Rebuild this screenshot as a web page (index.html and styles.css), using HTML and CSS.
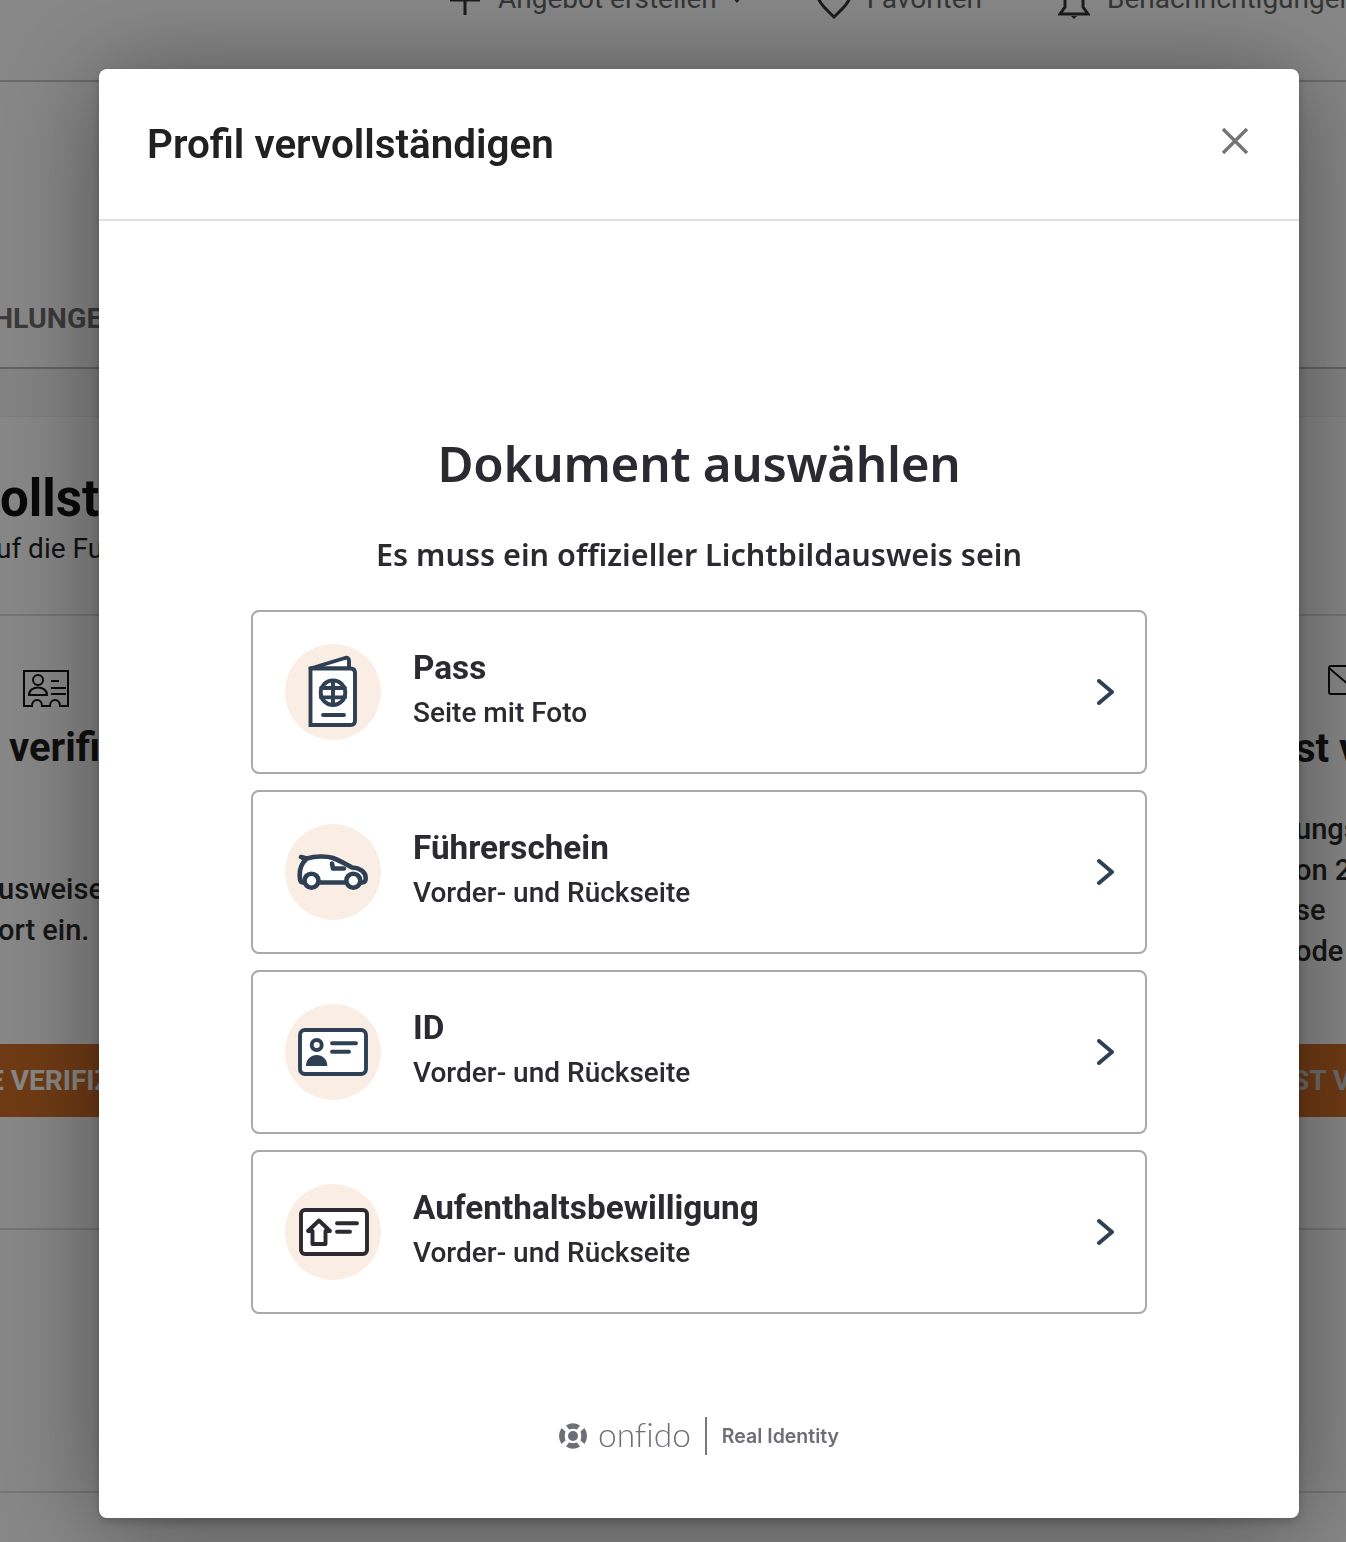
FILE: index.html
```html
<!DOCTYPE html>
<html lang="de">
<head>
<meta charset="utf-8">
<title>Profil vervollständigen</title>
<link rel="stylesheet" href="styles.css">
</head>
<body>
<div class="page">
  <nav class="nav">
    <svg class="nav-plus" viewBox="0 0 30 30"><path d="M15 0V30M0 15H30"/></svg>
    <span class="nav-text">Angebot erstellen</span>
    <svg class="nav-caret" viewBox="0 0 12 7"><path d="M0 0H12L6 7Z"/></svg>
    <svg class="nav-heart" viewBox="0 0 38 40"><path d="M2 12C2 22 12 30 19 37C26 30 36 22 36 12"/></svg>
    <span class="nav-text">Favoriten</span>
    <svg class="nav-bell" viewBox="0 0 32 40"><path d="M7 0V28L2 35H30L25 28V0"/><path class="nav-clap" d="M13 37H19L16 40Z"/></svg>
    <span class="nav-text">Benachrichtigungen</span>
  </nav>
  <div class="tabs"><span class="tab-text">HLUNGEN</span></div>
  <div class="tabs-gap"></div>
  <section class="intro">
    <div class="intro-title">ollständigen</div>
    <div class="intro-sub">uf die Funktionen</div>
  </section>
  <section class="cols">
    <div class="col col-left">
      <svg class="col-icon" viewBox="0 0 48 38">
        <path d="M2 1H46V36H38C38 28 28 28 28 36H20C20 28 10 28 10 36H2Z"/>
        <circle cx="16" cy="10" r="5"/>
        <path d="M7 25C7 15 25 15 25 25ZM29 11H37M29 18H44M29 24H44"/>
      </svg>
      <h3 class="col-title">verifizieren</h3>
      <p class="col-text">usweise<br>ort ein.</p>
      <div class="col-btn">E VERIFIZIEREN</div>
    </div>
    <div class="col col-right">
      <svg class="col-icon-mail" viewBox="0 0 30 32"><path d="M28 1H3Q1 1 1 3V27Q1 29 3 29H28M1 3L28 26"/></svg>
      <h3 class="col-title-r">st v</h3>
      <p class="col-text-r">ungs<br>on 2<br>se<br>ode</p>
      <div class="col-btn-r">ST V</div>
    </div>
  </section>
  <section class="lower"></section>
</div>

<div class="overlay">
  <div class="modal">
    <header class="modal-head">
      <h2 class="modal-title">Profil vervollständigen</h2>
      <svg class="close" viewBox="0 0 28 28"><path d="M2 2L26 26M26 2L2 26"/></svg>
    </header>
    <div class="modal-body">
      <h1 class="doc-title">Dokument auswählen</h1>
      <p class="doc-sub">Es muss ein offizieller Lichtbildausweis sein</p>
      <ul class="doc-list">
        <li class="doc-card">
          <span class="doc-icon">
            <svg viewBox="0 0 96 96">
              <path class="ic ic-w" d="M25.5 24.5L60 14Q64 13 64 17V24.5Z"/>
              <path class="ic ic-w ic-square" d="M25.5 24.5V81H65.5Q70 81 70 76.5V29Q70 24.5 65.5 24.5Z"/>
              <circle class="ic" cx="48" cy="48.7" r="12.3"/>
              <path class="ic" d="M36 44H60M36 53.4H60M48 37V60"/>
              <path class="ic" d="M38 71H59"/>
            </svg>
          </span>
          <span class="doc-text"><strong class="doc-name">Pass</strong><span class="doc-desc">Seite mit Foto</span></span>
          <svg class="chev" viewBox="0 0 18 26"><path d="M2 2L15 13L2 24"/></svg>
        </li>
        <li class="doc-card">
          <span class="doc-icon">
            <svg viewBox="0 0 96 96">
              <path class="ic ic-w ic-thick" d="M16 33L22 34.5C30 32 42 32 48 34C56 37 62 41 67 43.5C75 44 80.7 48 80.7 54C80.7 57 80 58.5 77 58.5H18C15.5 58.5 14.7 56 14.7 51C14.7 44 17 39 21 35.5Z"/>
              <circle class="ic ic-w ic-thick" cx="26.5" cy="56.7" r="7"/>
              <circle class="ic ic-w ic-thick" cx="68.3" cy="56.7" r="7"/>
              <path class="ic ic-thick" d="M47 39.5L48 44.5H59"/>
            </svg>
          </span>
          <span class="doc-text"><strong class="doc-name">Führerschein</strong><span class="doc-desc">Vorder- und Rückseite</span></span>
          <svg class="chev" viewBox="0 0 18 26"><path d="M2 2L15 13L2 24"/></svg>
        </li>
        <li class="doc-card">
          <span class="doc-icon">
            <svg viewBox="0 0 96 96">
              <rect class="ic ic-w" x="15" y="26" width="66" height="44" rx="5"/>
              <circle class="ic" cx="31.7" cy="41" r="5"/>
              <path class="ic-fill" d="M21 62C21 55 26 51 31.7 51S42.3 55 42.3 62Z"/>
              <path class="ic" d="M47 39.3H71M47 47.7H64"/>
            </svg>
          </span>
          <span class="doc-text"><strong class="doc-name">ID</strong><span class="doc-desc">Vorder- und Rückseite</span></span>
          <svg class="chev" viewBox="0 0 18 26"><path d="M2 2L15 13L2 24"/></svg>
        </li>
        <li class="doc-card">
          <span class="doc-icon">
            <svg viewBox="0 0 96 96">
              <rect class="ic ic-dark ic-w" x="16" y="26" width="66" height="44" rx="4"/>
              <path class="ic ic-dark" d="M34 36.5L23 47H27.5V60H40.5V47H45Z"/>
              <path class="ic ic-dark" d="M52 39.3H72M52 47.7H65"/>
            </svg>
          </span>
          <span class="doc-text"><strong class="doc-name">Aufenthaltsbewilligung</strong><span class="doc-desc">Vorder- und Rückseite</span></span>
          <svg class="chev" viewBox="0 0 18 26"><path d="M2 2L15 13L2 24"/></svg>
        </li>
      </ul>
      <footer class="brand">
        <svg class="brand-mark" viewBox="1 1 30 30">
          <circle cx="16" cy="16" r="5"/>
          <path d="M9 5.5Q16 1 23 5.5L20 9.5Q16 8 12 9.5ZM9 26.5Q16 31 23 26.5L20 22.5Q16 24 12 22.5ZM4.5 8Q-0.5 16 4.5 24L8.5 20.5Q7 16 8.5 11.5ZM27.5 8Q32.5 16 27.5 24L23.5 20.5Q25 16 23.5 11.5Z"/>
        </svg>
        <span class="brand-name">onfido</span>
        <span class="brand-line"></span>
        <span class="brand-tag">Real Identity</span>
      </footer>
    </div>
  </div>
</div>
</body>
</html>
```
FILE: styles.css
```css
* { box-sizing: border-box; }
html, body { margin: 0; padding: 0; }
body { width: 1346px; height: 1542px; overflow: hidden; background: #fff; font-family: Roboto, "Liberation Sans", sans-serif; color: #222; }

.page { width: 1346px; height: 1542px; overflow: hidden; }
.nav { height: 82px; border-bottom: 2px solid #c9c9c9; display: flex; align-items: flex-start; padding-left: 450px; white-space: nowrap; overflow: hidden; }
.nav-text { font-size: 28px; line-height: 32px; margin-top: -17px; color: #666; flex: none; }
.nav-plus { width: 30px; height: 30px; flex: none; margin: -15px 18px 0 0; fill: none; stroke: #333; stroke-width: 3; }
.nav-caret { width: 12px; height: 7px; flex: none; margin: -4px 72px 0 14px; fill: #444; }
.nav-heart { width: 38px; height: 40px; flex: none; margin: -20px 14px 0 0; fill: none; stroke: #333; stroke-width: 3; }
.nav-bell { width: 32px; height: 40px; flex: none; margin: -21px 17px 0 76px; fill: none; stroke: #333; stroke-width: 3; }
.nav-clap { fill: #333; stroke: none; }

.tabs { height: 287px; border-bottom: 2px solid #bbb; padding-top: 219px; }
.tab-text { display: block; margin-left: -7px; font-size: 28.5px; line-height: 36px; font-weight: 700; color: #6e6e6e; white-space: nowrap; }
.tabs-gap { height: 47px; background: #f8f8f8; }

.intro { height: 200px; border-top: 1px solid #eee; border-bottom: 2px solid #ddd; padding-top: 52px; white-space: nowrap; }
.intro-title { font-size: 51px; line-height: 60px; font-weight: 700; color: #111; }
.intro-sub { font-size: 28px; line-height: 36px; margin-top: 2px; margin-left: -4px; color: #222; }

.cols { height: 614px; display: grid; grid-template-columns: 1290px 56px; border-bottom: 2px solid #ddd; white-space: nowrap; }
.col { display: flex; flex-direction: column; align-items: flex-start; overflow: hidden; }
.col-left { padding-top: 54px; }
.col-icon { width: 48px; height: 38px; margin-left: 22px; fill: none; stroke: #111; stroke-width: 2; flex: none; }
.col-title { margin: 16px 0 0 9px; font-size: 40px; line-height: 48px; font-weight: 700; color: #1c1c1c; }
.col-text { margin: 97px 0 0 -2px; font-size: 29px; line-height: 41px; font-weight: 500; color: #2a2a2a; }
.col-btn { margin-top: 93px; width: 300px; height: 73px; background: #d26f28; color: #fff; font-size: 28px; line-height: 73px; font-weight: 700; overflow: hidden; text-indent: -12px; }
.col-right { padding-top: 49px; }
.col-icon-mail { width: 30px; height: 32px; margin-left: 38px; fill: none; stroke: #111; stroke-width: 2; flex: none; }
.col-title-r { margin: 28px 0 0 5px; font-size: 40px; line-height: 48px; font-weight: 700; color: #1c1c1c; }
.col-text-r { margin: 36px 0 0 5px; font-size: 29px; line-height: 40.7px; font-weight: 500; color: #2a2a2a; }
.col-btn-r { margin-top: 72px; width: 56px; height: 73px; background: #d26f28; color: #ccc; font-size: 28px; line-height: 73px; font-weight: 700; padding-left: 2px; overflow: hidden; }

.lower { height: 263px; border-bottom: 2px solid #ddd; }

.overlay { position: fixed; left: 0; top: 0; width: 1346px; height: 1542px; background: rgba(0,0,0,.47); display: flex; justify-content: center; align-items: flex-start; padding: 69px 0 0 52px; }
.modal { width: 1200px; height: 1449px; flex: none; background: #fff; border-radius: 8px; box-shadow: 0 8px 100px rgba(0,0,0,.42), 0 4px 10px rgba(0,0,0,.2); display: flex; flex-direction: column; }
.modal-head { height: 152px; flex: none; border-bottom: 2px solid #e0e0e0; display: flex; justify-content: space-between; align-items: flex-start; padding: 51px 50px 0 48px; }
.modal-title { margin: 0; font-size: 40.4px; line-height: 50px; font-weight: 600; color: #212121; }
.close { width: 28px; height: 28px; margin-top: 7px; fill: none; stroke: #757575; stroke-width: 3.4; flex: none; }

.modal-body { flex: 1; display: flex; flex-direction: column; align-items: center; padding-top: 208px; font-family: "Noto Sans", sans-serif; }
.doc-title { margin: 0; font-size: 49.4px; line-height: 68px; font-weight: 600; letter-spacing: -.3px; color: #2a2a30; white-space: nowrap; }
.doc-sub { margin: 37px 0 0; font-size: 30.6px; line-height: 40px; font-weight: 600; color: #2a2a30; white-space: nowrap; }
.doc-list { list-style: none; margin: 36px 0 0; padding: 0; width: 896px; display: flex; flex-direction: column; gap: 16px; }
.doc-card { height: 164px; border: 2px solid #a9a9ad; border-radius: 8px; display: flex; align-items: center; padding: 0 30px 0 32px; font-family: Roboto, sans-serif; color: #2a2a30; }
.doc-icon { width: 96px; height: 96px; flex: none; border-radius: 50%; background: #faeee4; }
.doc-icon svg { display: block; width: 96px; height: 96px; }
.ic { fill: none; stroke: #2f4054; stroke-width: 3.9; stroke-linecap: round; stroke-linejoin: round; }
.ic-w { fill: #fff; }
.ic-thick { stroke-width: 4.6; }
.ic-square { stroke-linejoin: miter; }
.ic-dark { stroke: #2a2a30; }
.ic-fill { fill: #2f4054; }
.doc-text { flex: 1; display: flex; flex-direction: column; margin: -5px 0 0 32px; }
.doc-name { font-size: 33.3px; line-height: 40px; font-weight: 700; color: #2a2a30; }
.doc-desc { font-size: 28px; line-height: 36px; font-weight: 500; margin-top: 7px; color: #2a2a30; }
.chev { width: 18px; height: 26px; flex: none; fill: none; stroke: #2f4054; stroke-width: 3.9; stroke-linecap: round; stroke-linejoin: round; }

.brand { display: flex; align-items: center; margin-top: 102px; height: 40px; margin-left: -1px; color: #6d6e76; }
.brand-mark { width: 30px; height: 30px; fill: #6d6e76; flex: none; }
.brand-name { margin: -5px 0 0 10px; font-family: Lato, sans-serif; font-size: 33.5px; font-weight: 300; line-height: 40px; font-variant-ligatures: none; }
.brand-line { width: 2px; height: 38px; background: #77787f; margin: 0 15px 0 14px; }
.brand-tag { font-family: Inter, sans-serif; font-size: 19.5px; font-weight: 600; line-height: 30px; }
```
